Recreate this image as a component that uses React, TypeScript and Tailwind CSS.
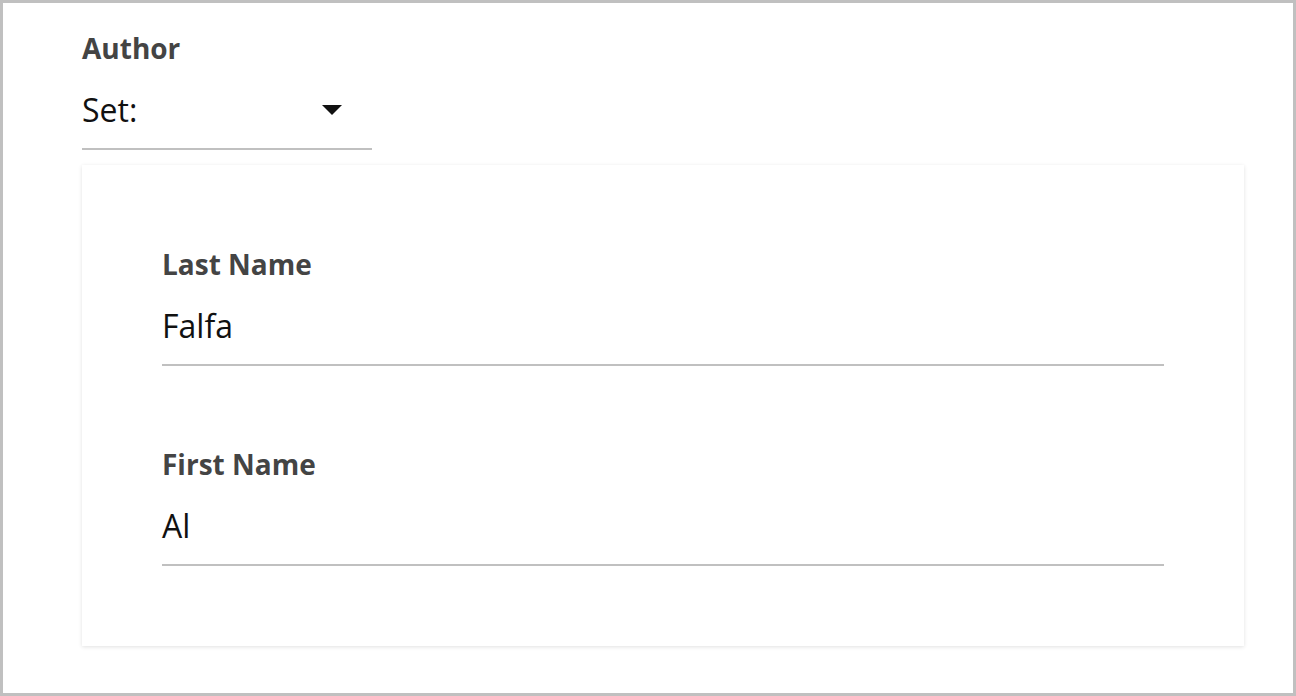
import React from "react";

function Field({ label, value }: { label: string; value: string }) {
  return (
    <div className="flex flex-col">
      <div className="text-[28px] font-bold leading-[36px] text-[#444444]">{label}</div>
      <div className="mt-[22px] border-b-2 border-[#c0c0c0] pb-[16px] text-[32px] leading-[44px] text-[#111111]">
        {value}
      </div>
    </div>
  );
}

export default function App() {
  return (
    <div
      className="h-[696px] w-[1296px] border-[3px] border-[#c0c0c0] bg-white"
      style={{ fontFamily: '"Open Sans", "Noto Sans", sans-serif' }}
    >
      <div className="flex flex-col pl-[79px] pr-[49px] pt-[27px]">
        <div className="text-[28px] font-bold leading-[36px] text-[#444444]">Author</div>
        <div className="mt-[22px] flex w-[290px] items-center justify-between border-b-2 border-[#c0c0c0] pb-[16px]">
          <span className="text-[32px] leading-[44px] text-[#111111]">Set:</span>
          <svg width="20" height="10" viewBox="0 0 20 10" className="mr-[30px]">
            <polygon points="0,0 20,0 10,10" fill="#111111" />
          </svg>
        </div>
        <div className="mt-[15px] flex flex-col gap-[80px] bg-white px-[80px] pb-[80px] pt-[81px] shadow-[0_1px_4px_rgba(0,0,0,0.12)]">
          <Field label="Last Name" value="Falfa" />
          <Field label="First Name" value="Al" />
        </div>
      </div>
    </div>
  );
}
